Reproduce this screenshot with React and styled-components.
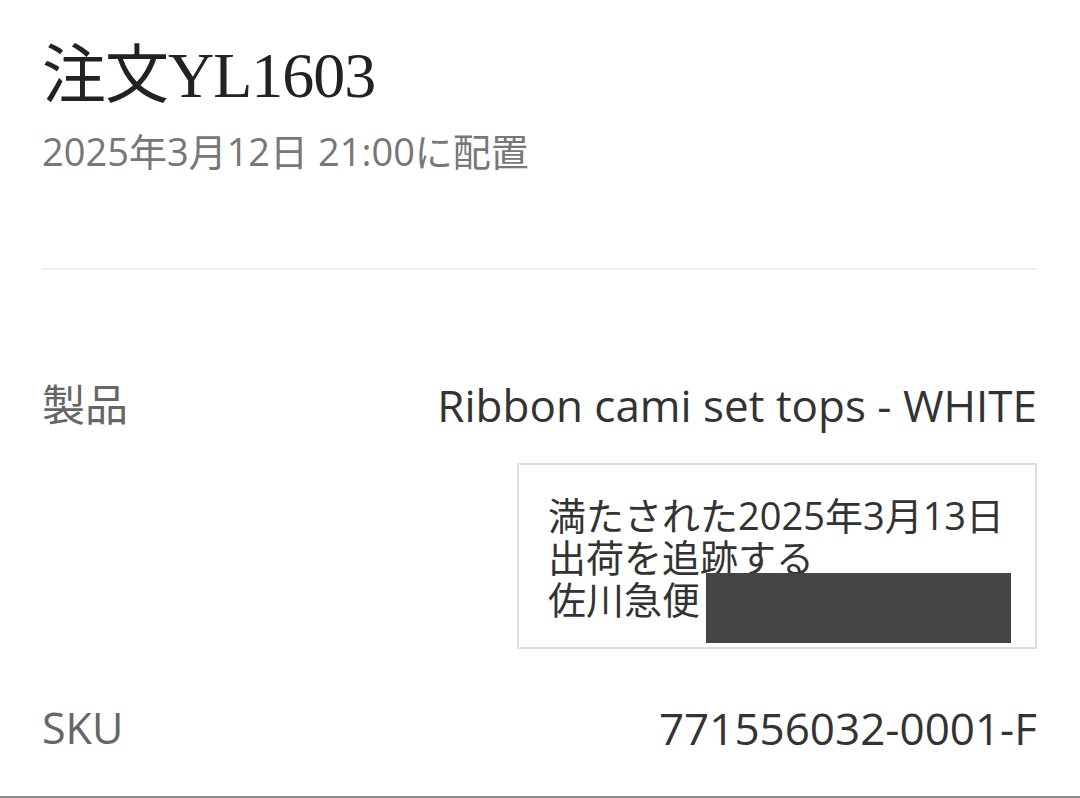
import React from "react";
import styled, { createGlobalStyle } from "styled-components";

const Global = createGlobalStyle`
  html, body { margin: 0; padding: 0; background: #fff; }
  body { font-family: "Open Sans", "Noto Sans CJK JP", sans-serif; }
`;

const Page = styled.div`
  width: 1080px;
  height: 798px;
  box-sizing: border-box;
  padding: 0 43px 0 42px;
  display: flex;
  flex-direction: column;
  border-bottom: 2px solid #8a8a8a;
  overflow: hidden;
`;

const Title = styled.h1`
  margin: 40px 0 0;
  font-family: "Liberation Serif", "Noto Sans CJK JP", serif;
  font-weight: 400;
  font-size: 64px;
  line-height: 72px;
  color: #222;
  letter-spacing: -1px;
`;

const Placed = styled.div`
  margin-top: 15px;
  font-size: 38px;
  line-height: 48px;
  color: #777;
`;

const Divider = styled.hr`
  margin: 93px 0 0;
  border: 0;
  border-top: 2px solid #eeeeee;
`;

const Row = styled.div`
  display: flex;
  justify-content: space-between;
  align-items: flex-start;
  margin-top: ${(p) => p.$top}px;
`;

const Label = styled.div`
  font-size: 43px;
  line-height: 56px;
  color: #666;
`;

const Value = styled.div`
  display: flex;
  flex-direction: column;
  align-items: flex-end;
  font-size: 44px;
  line-height: 56px;
  color: #333;
  white-space: nowrap;
`;

const Fulfill = styled.div`
  margin-top: 30px;
  width: 520px;
  box-sizing: border-box;
  border: 2px solid #dddddd;
  padding: 29px 8px 27px 29px;
  font-size: 38px;
  line-height: 42px;
  color: #333;
`;

const Line = styled.div`
  display: flex;
  align-items: flex-start;
  white-space: nowrap;
`;

const Redacted = styled.span`
  display: inline-block;
  flex: none;
  width: 305px;
  height: 70px;
  margin: -5px 0 -23px 6px;
  background: #454545;
`;

export default function App() {
  return (
    <>
      <Global />
      <Page>
        <Title>注文YL1603</Title>
        <Placed>2025年3月12日 21:00に配置</Placed>
        <Divider />
        <Row $top={107}>
          <Label>製品</Label>
          <Value>
            Ribbon cami set tops - WHITE
            <Fulfill>
              <Line>満たされた2025年3月13日</Line>
              <Line>出荷を追跡する</Line>
              <Line>
                佐川急便
                <Redacted />
              </Line>
            </Fulfill>
          </Value>
        </Row>
        <Row $top={51}>
          <Label>SKU</Label>
          <Value>771556032-0001-F</Value>
        </Row>
      </Page>
    </>
  );
}
